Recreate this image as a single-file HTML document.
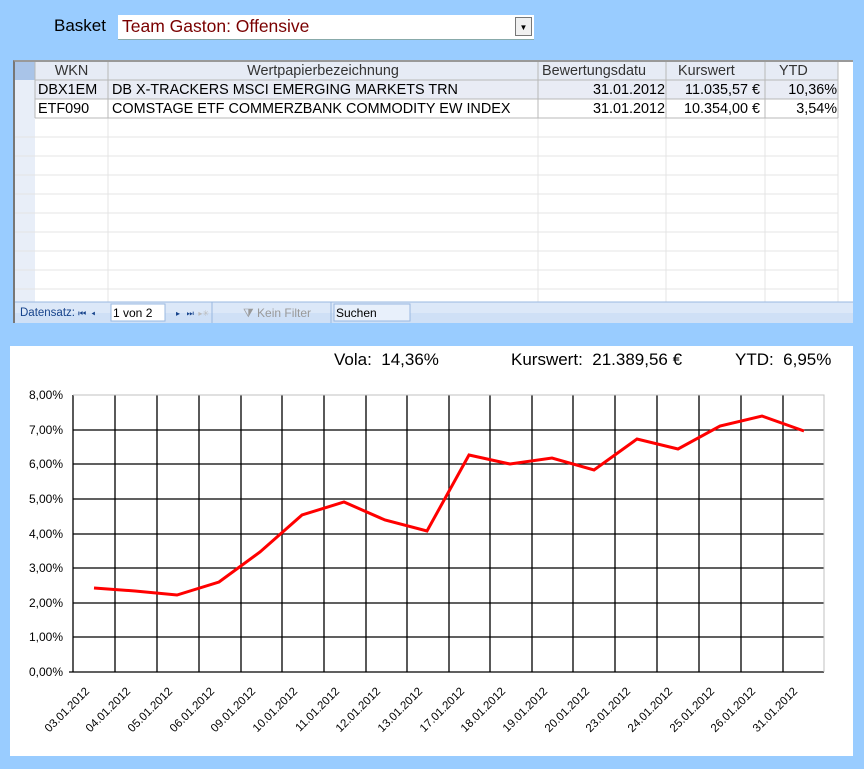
<!DOCTYPE html>
<html><head><meta charset="utf-8"><style>
body{margin:0;width:864px;height:769px;background:#99CCFF;position:relative;overflow:hidden;font-family:"Liberation Sans",sans-serif}
.abs{position:absolute}
.cell{position:absolute;font-size:14.4px;color:#000;white-space:nowrap;line-height:19px}
</style></head><body>
<div class="abs" style="left:54px;top:16px;font-size:17px">Basket</div>
<div class="abs" style="left:118px;top:15px;width:416px;height:24px;background:#fff;border-bottom:1px solid #8aa"></div>
<div class="abs" style="left:122px;top:16px;font-size:17.5px;color:#7a0000">Team Gaston: Offensive</div>
<div class="abs" style="left:515px;top:17px;width:17px;height:19px;background:#f0f0f0;border:1px solid #777;box-sizing:border-box;font-size:8px;text-align:center;line-height:19px">▼</div>

<div class="abs" style="left:13px;top:60px;width:840px;height:263px;background:#fff;border-left:2px solid #777;border-top:2px solid #999;box-sizing:border-box"></div>
<svg class="abs" style="left:15px;top:62px" width="838" height="261">
<rect x="0" y="0" width="20" height="240" fill="#e8eef8"/>
<rect x="0" y="0" width="20" height="18" fill="#a9c4e8"/>
<rect x="20" y="0" width="803" height="18" fill="#e6ebf5"/>
<rect x="20" y="18" width="803" height="19" fill="#e9ecf5"/>
<g stroke="#e4e4e4">
<line x1="93" y1="0" x2="93" y2="240"/><line x1="523" y1="0" x2="523" y2="240"/><line x1="651" y1="0" x2="651" y2="240"/><line x1="750" y1="0" x2="750" y2="240"/><line x1="823" y1="0" x2="823" y2="240"/>
<line x1="0" y1="75" x2="823" y2="75"/><line x1="0" y1="94" x2="823" y2="94"/><line x1="0" y1="113" x2="823" y2="113"/><line x1="0" y1="132" x2="823" y2="132"/><line x1="0" y1="151" x2="823" y2="151"/><line x1="0" y1="170" x2="823" y2="170"/><line x1="0" y1="189" x2="823" y2="189"/><line x1="0" y1="208" x2="823" y2="208"/><line x1="0" y1="227" x2="823" y2="227"/>
</g>
<g stroke="#b8b8b8">
<line x1="20" y1="0" x2="20" y2="56"/><line x1="93" y1="0" x2="93" y2="56"/><line x1="523" y1="0" x2="523" y2="56"/><line x1="651" y1="0" x2="651" y2="56"/><line x1="750" y1="0" x2="750" y2="56"/><line x1="823" y1="0" x2="823" y2="56"/>
<line x1="20" y1="18" x2="823" y2="18"/><line x1="20" y1="37" x2="823" y2="37"/><line x1="20" y1="56" x2="823" y2="56"/>
</g>
<rect x="0" y="240" width="838" height="21" fill="#dce8f8"/>
<line x1="0" y1="240" x2="838" y2="240" stroke="#9ab8e0"/>
<rect x="0" y="251" width="838" height="10" fill="#cfe0f6"/>
<line x1="197" y1="240" x2="197" y2="261" stroke="#9ab8e0"/><line x1="316" y1="240" x2="316" y2="261" stroke="#9ab8e0"/>
<rect x="96" y="242" width="54" height="17" fill="#fff" stroke="#9ab8e0"/>
<rect x="319" y="242" width="76" height="17" fill="#e8f0fb" stroke="#9ab8e0"/>
</svg>
<div class="cell" style="left:35px;top:62px;width:73px;text-align:center;color:#333">WKN</div>
<div class="cell" style="left:108px;top:62px;width:430px;text-align:center;color:#333">Wertpapierbezeichnung</div>
<div class="cell" style="left:542px;top:62px;color:#333">Bewertungsdatu</div>
<div class="cell" style="left:678px;top:62px;color:#333">Kurswert</div>
<div class="cell" style="left:779px;top:62px;color:#333">YTD</div>
<div class="cell" style="left:38px;top:81px">DBX1EM</div>
<div class="cell" style="left:112px;top:81px">DB X-TRACKERS MSCI EMERGING MARKETS TRN</div>
<div class="cell" style="left:538px;top:81px;width:127px;text-align:right">31.01.2012</div>
<div class="cell" style="left:666px;top:81px;width:94px;text-align:right">11.035,57 €</div>
<div class="cell" style="left:765px;top:81px;width:72px;text-align:right">10,36%</div>
<div class="cell" style="left:38px;top:100px">ETF090</div>
<div class="cell" style="left:112px;top:100px">COMSTAGE ETF COMMERZBANK COMMODITY EW INDEX</div>
<div class="cell" style="left:538px;top:100px;width:127px;text-align:right">31.01.2012</div>
<div class="cell" style="left:666px;top:100px;width:94px;text-align:right">10.354,00 €</div>
<div class="cell" style="left:765px;top:100px;width:72px;text-align:right">3,54%</div>
<div class="cell" style="left:20px;top:304px;font-size:11.5px;color:#15428b">Datensatz: <span style="font-size:9px">⏮ &nbsp;◂</span></div>
<div class="cell" style="left:113px;top:304px;font-size:12px">1 von 2</div>
<div class="cell" style="left:176px;top:304px;font-size:8px;color:#15428b">▸ &nbsp; ⏭ &nbsp;<span style="color:#bbb">▸✳</span></div>
<div class="cell" style="left:243px;top:304px;font-size:12px;color:#999">⧩ Kein Filter</div>
<div class="cell" style="left:336px;top:304px;font-size:12px">Suchen</div>

<div class="abs" style="left:10px;top:346px;width:843px;height:410px;background:#fff"></div>
<div class="abs" style="left:334px;top:350px;font-size:17px">Vola:&nbsp;&nbsp;14,36%</div>
<div class="abs" style="left:511px;top:350px;font-size:17px">Kurswert:&nbsp; 21.389,56 €</div>
<div class="abs" style="left:735px;top:350px;font-size:17px">YTD:&nbsp;&nbsp;6,95%</div>
<svg class="abs" style="left:0;top:0" width="864" height="769" font-family="Liberation Sans, sans-serif">
<g stroke="#000" stroke-width="1.3">
<line x1="115" y1="395" x2="115" y2="672"/><line x1="157" y1="395" x2="157" y2="672"/><line x1="199" y1="395" x2="199" y2="672"/><line x1="241" y1="395" x2="241" y2="672"/><line x1="282" y1="395" x2="282" y2="672"/><line x1="324" y1="395" x2="324" y2="672"/><line x1="366" y1="395" x2="366" y2="672"/><line x1="407" y1="395" x2="407" y2="672"/><line x1="449" y1="395" x2="449" y2="672"/><line x1="490" y1="395" x2="490" y2="672"/><line x1="532" y1="395" x2="532" y2="672"/><line x1="573" y1="395" x2="573" y2="672"/><line x1="615" y1="395" x2="615" y2="672"/><line x1="657" y1="395" x2="657" y2="672"/><line x1="699" y1="395" x2="699" y2="672"/><line x1="741" y1="395" x2="741" y2="672"/><line x1="783" y1="395" x2="783" y2="672"/>
<line x1="73" y1="430" x2="824" y2="430"/><line x1="73" y1="464" x2="824" y2="464"/><line x1="73" y1="499" x2="824" y2="499"/><line x1="73" y1="534" x2="824" y2="534"/><line x1="73" y1="568" x2="824" y2="568"/><line x1="73" y1="603" x2="824" y2="603"/><line x1="73" y1="637" x2="824" y2="637"/>
<line x1="73" y1="395" x2="73" y2="672"/><line x1="69" y1="672" x2="824" y2="672"/>
</g>
<polyline points="73,395 824,395 824,672" fill="none" stroke="#c0c0c0"/>
<polyline points="94,588 135,591 177,595 219,582 260,552 302,515 344,502 385,520 427,531 469,455 510,464 552,458 594,470 637,439 678,449 720,426 762,416 804,431" fill="none" stroke="#f00" stroke-width="3"/>
<g font-size="12" text-anchor="end">
<text x="63" y="399">8,00%</text><text x="63" y="434">7,00%</text><text x="63" y="468">6,00%</text><text x="63" y="503">5,00%</text><text x="63" y="538">4,00%</text><text x="63" y="572">3,00%</text><text x="63" y="607">2,00%</text><text x="63" y="641">1,00%</text><text x="63" y="676">0,00%</text>
</g>
<g font-size="11.5" text-anchor="end">
<text transform="translate(90,692) rotate(-45)">03.01.2012</text>
<text transform="translate(131,692) rotate(-45)">04.01.2012</text>
<text transform="translate(173,692) rotate(-45)">05.01.2012</text>
<text transform="translate(215,692) rotate(-45)">06.01.2012</text>
<text transform="translate(256,692) rotate(-45)">09.01.2012</text>
<text transform="translate(298,692) rotate(-45)">10.01.2012</text>
<text transform="translate(340,692) rotate(-45)">11.01.2012</text>
<text transform="translate(381,692) rotate(-45)">12.01.2012</text>
<text transform="translate(423,692) rotate(-45)">13.01.2012</text>
<text transform="translate(465,692) rotate(-45)">17.01.2012</text>
<text transform="translate(506,692) rotate(-45)">18.01.2012</text>
<text transform="translate(548,692) rotate(-45)">19.01.2012</text>
<text transform="translate(590,692) rotate(-45)">20.01.2012</text>
<text transform="translate(631,692) rotate(-45)">23.01.2012</text>
<text transform="translate(673,692) rotate(-45)">24.01.2012</text>
<text transform="translate(715,692) rotate(-45)">25.01.2012</text>
<text transform="translate(756,692) rotate(-45)">26.01.2012</text>
<text transform="translate(798,692) rotate(-45)">31.01.2012</text>
</g>
</svg>
</body></html>
